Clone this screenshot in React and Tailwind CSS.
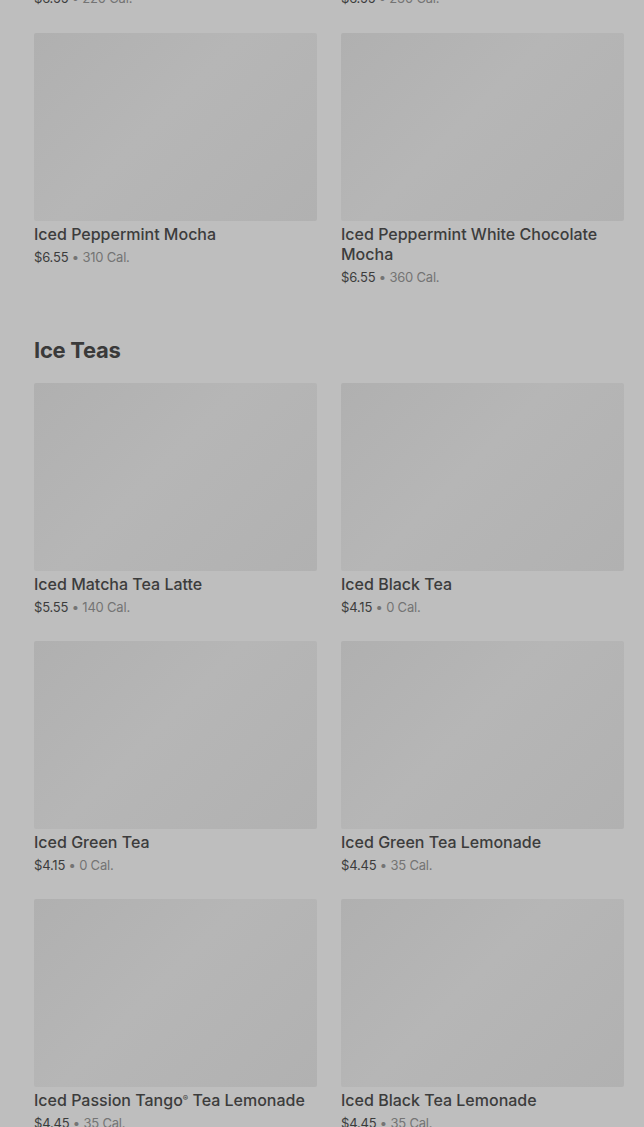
import React from "react";

const Card = ({ name, price, cal }) => (
  <div className="flex flex-col">
    <div className="h-[188px] w-full rounded-[2px] bg-[linear-gradient(135deg,#b0b0b0_0%,#b6b6b6_45%,#b1b1b1_100%)]" />
    <div className="mt-[3px] text-[16px] leading-[20px] font-medium text-[#3c3c3c]">{name}</div>
    <div className="mt-1 text-[13px] leading-[18px] tracking-[-0.2px] text-[#3c3c3c]">
      {price}
      <span className="text-[#747474]"> • {cal}</span>
    </div>
  </div>
);

export default function App() {
  return (
    <div
      className="min-h-[1127px] w-[644px] overflow-hidden bg-[#bebebe] pl-[34px] pr-[20px]"
      style={{ fontFamily: "Inter, Roboto, 'Liberation Sans', sans-serif" }}
    >
      <div className="grid grid-cols-2 gap-x-6 -mt-[11px]">
        <div className="text-[13px] leading-[18px] tracking-[-0.2px] text-[#3c3c3c]">
          $6.55<span className="text-[#747474]"> • 220 Cal.</span>
        </div>
        <div className="text-[13px] leading-[18px] tracking-[-0.2px] text-[#3c3c3c]">
          $6.55<span className="text-[#747474]"> • 230 Cal.</span>
        </div>
      </div>
      <div className="grid grid-cols-2 gap-x-6 gap-y-[25px] mt-[26px]">
        <Card name="Iced Peppermint Mocha" price="$6.55" cal="310 Cal." />
        <Card name="Iced Peppermint White Chocolate Mocha" price="$6.55" cal="360 Cal." />
      </div>
      <h2 className="mt-[49px] mb-[18px] text-[22px] leading-[30px] font-bold text-[#3a3a3a] tracking-[-0.3px]">Ice Teas</h2>
      <div className="grid grid-cols-2 gap-x-6 gap-y-[25px]">
        <Card name="Iced Matcha Tea Latte" price="$5.55" cal="140 Cal." />
        <Card name="Iced Black Tea" price="$4.15" cal="0 Cal." />
        <Card name="Iced Green Tea" price="$4.15" cal="0 Cal." />
        <Card name="Iced Green Tea Lemonade" price="$4.45" cal="35 Cal." />
        <Card
          name={<>Iced Passion Tango<sup className="text-[8px] -top-[5px]">®</sup> Tea Lemonade</>}
          price="$4.45"
          cal="35 Cal."
        />
        <Card name="Iced Black Tea Lemonade" price="$4.45" cal="35 Cal." />
      </div>
    </div>
  );
}
